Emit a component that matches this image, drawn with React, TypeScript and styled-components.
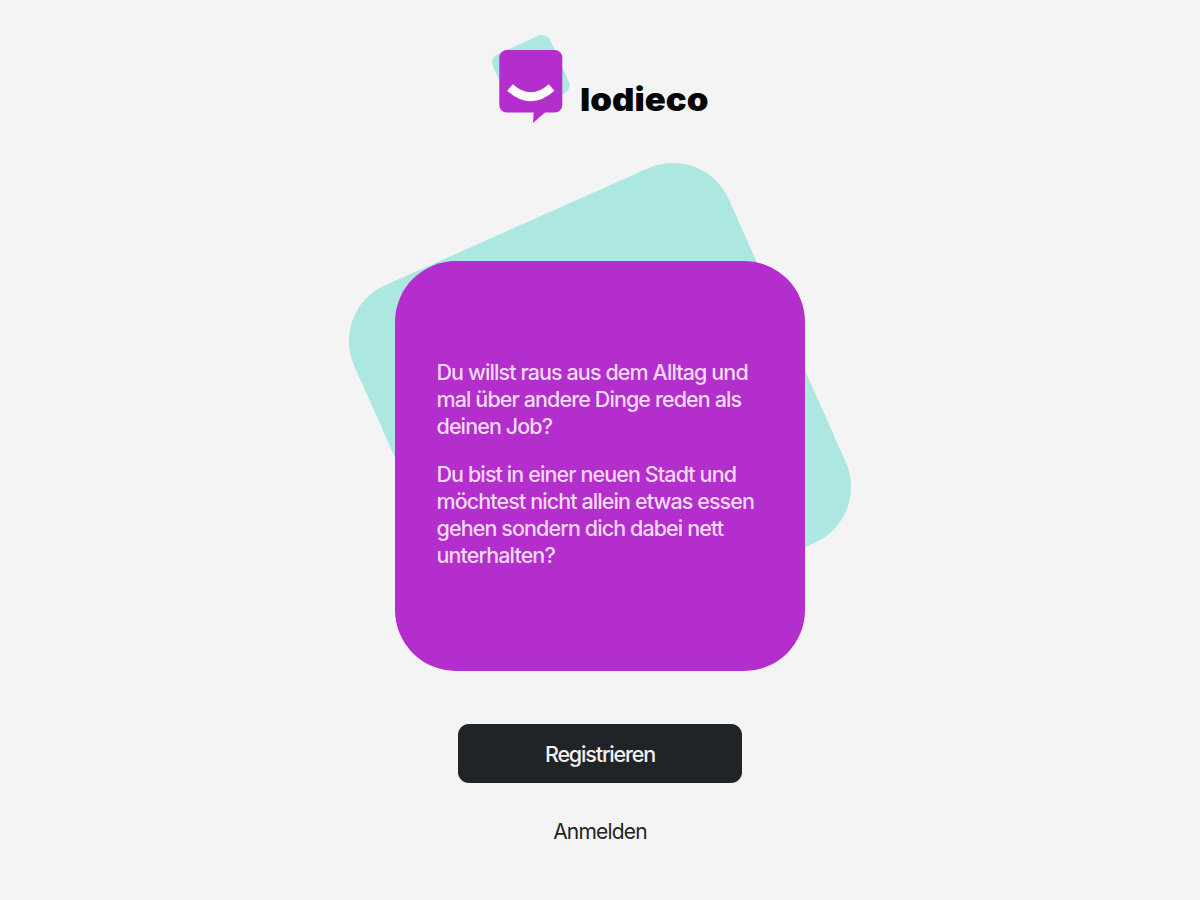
import React from "react";
import styled, { createGlobalStyle } from "styled-components";

const paragraphs = [
  [
    "Du willst raus aus dem Alltag und",
    "mal über andere Dinge reden als",
    "deinen Job?",
  ],
  [
    "Du bist in einer neuen Stadt und",
    "möchtest nicht allein etwas essen",
    "gehen sondern dich dabei nett",
    "unterhalten?",
  ],
];

const GlobalStyle = createGlobalStyle`
  * {
    box-sizing: border-box;
  }
  body {
    margin: 0;
    background: #f4f4f4;
    font-family: Inter, "Liberation Sans", sans-serif;
  }
`;

const Page = styled.main`
  display: flex;
  flex-direction: column;
  align-items: center;
  height: 900px;
  padding-top: 34px;
  overflow: hidden;
`;

const Brand = styled.header`
  display: flex;
  align-items: flex-start;
  width: 218px;
  height: 92px;
`;

const LogoMark = styled.svg`
  flex: none;
  width: 80px;
  height: 92px;
`;

const BrandName = styled.span`
  margin: 46px 0 0 9px;
  font-size: 32px;
  font-weight: 900;
  line-height: 40px;
  color: #050505;
  transform: scaleX(1.085);
  transform-origin: left center;
`;

const CardStack = styled.section`
  position: relative;
  width: 410px;
  height: 410px;
  margin-top: 135px;
`;

const CardShadow = styled.div`
  position: absolute;
  top: -52.5px;
  left: 0.4px;
  width: 410px;
  height: 410px;
  border-radius: 61px;
  background: #ace8e1;
  transform: rotate(-24deg);
`;

const IntroCard = styled.div`
  position: relative;
  display: flex;
  flex-direction: column;
  justify-content: center;
  gap: 21px;
  height: 100%;
  padding: 0 0 4px 41.5px;
  border-radius: 61px;
  background: #b42dcd;
`;

const Paragraph = styled.p`
  margin: 0;
  font-size: 21.5px;
  font-weight: 450;
  line-height: 27px;
  letter-spacing: -0.9px;
  color: #f4daf8;
`;

const Line = styled.span`
  display: block;
  white-space: nowrap;
`;

const RegisterButton = styled.button`
  width: 284px;
  height: 59px;
  margin-top: 53px;
  padding: 0;
  border: none;
  border-radius: 11px;
  background: #212427;
  color: #f0f0f0;
  font-family: inherit;
  font-size: 21.5px;
  font-weight: 500;
  letter-spacing: -1.15px;
  cursor: pointer;
`;

const LoginLink = styled.a`
  margin-top: 35px;
  font-size: 21px;
  line-height: 27px;
  letter-spacing: -0.8px;
  color: #242424;
  cursor: pointer;
`;

const Logo = () => (
  <LogoMark viewBox="491 34 80 92">
    <rect
      x="499.3"
      y="42.3"
      width="63"
      height="63"
      rx="9"
      fill="#ace8e1"
      transform="rotate(-24 530.8 73.8)"
    />
    <rect x="499.3" y="50" width="63" height="62.5" rx="7.5" fill="#b42dcd" />
    <path d="M533.8 111.5 L533 123 L546 111.5 Z" fill="#b42dcd" />
    <path
      d="M510 87.5 Q530.8 106 551.6 87.5"
      fill="none"
      stroke="#fff"
      strokeWidth="8.5"
    />
  </LogoMark>
);

const App = () => {
  return (
    <>
      <GlobalStyle />
      <Page>
        <Brand>
          <Logo />
          <BrandName>lodieco</BrandName>
        </Brand>
        <CardStack>
          <CardShadow />
          <IntroCard>
            {paragraphs.map((lines, idx) => (
              <Paragraph key={idx}>
                {lines.map((line) => (
                  <Line key={line}>{line}</Line>
                ))}
              </Paragraph>
            ))}
          </IntroCard>
        </CardStack>
        <RegisterButton>Registrieren</RegisterButton>
        <LoginLink>Anmelden</LoginLink>
      </Page>
    </>
  );
};

export default App;
